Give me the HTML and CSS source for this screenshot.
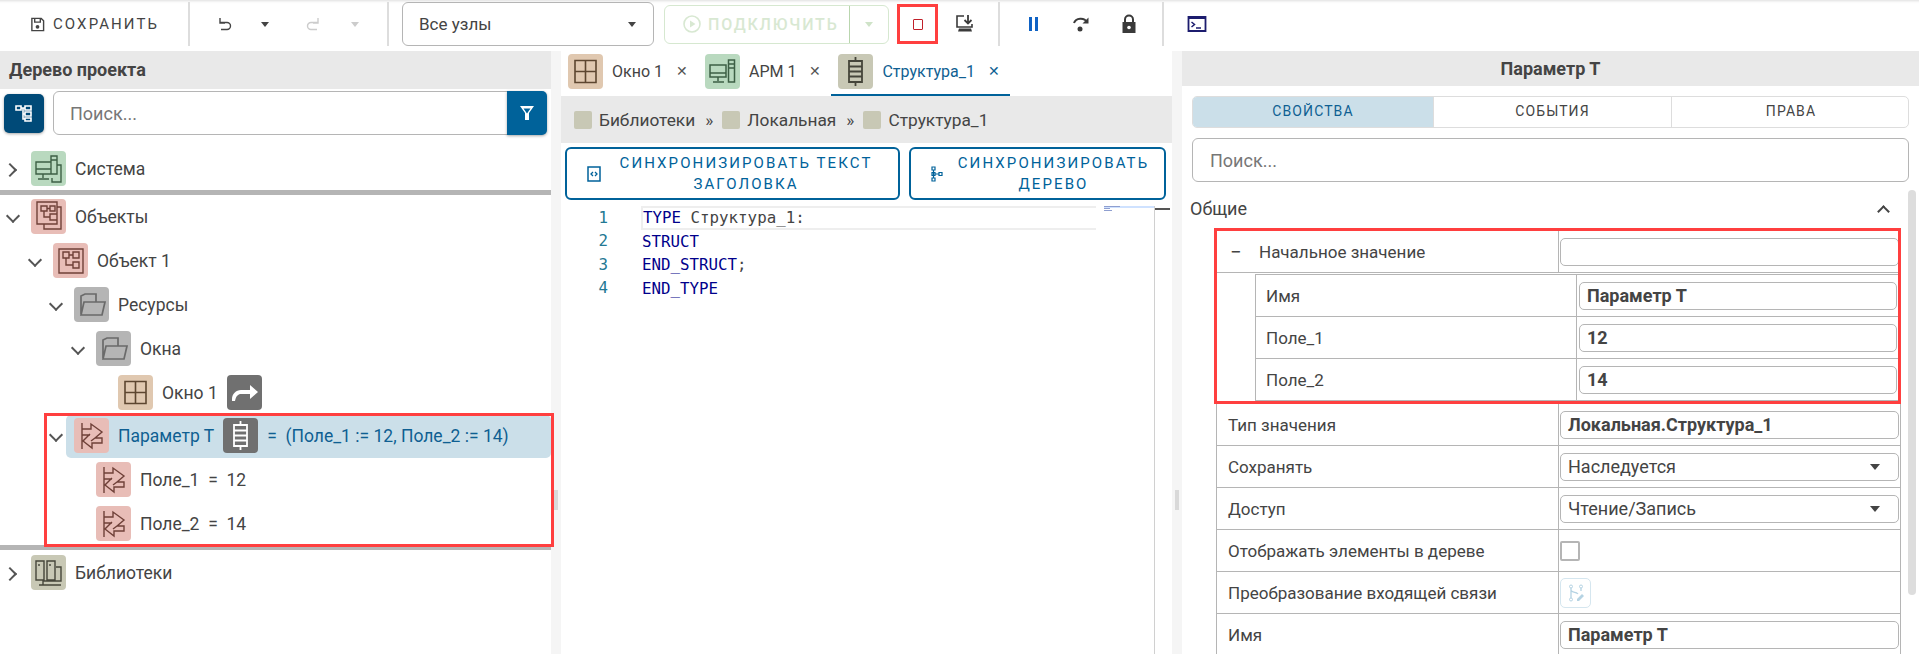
FILE: index.html
```html
<!DOCTYPE html>
<html lang="ru">
<head>
    <meta charset="UTF-8">
    <title>Дерево проекта</title>
    <link rel="stylesheet" href="styles.css">
</head>
<body>
    <!-- Набор иконок -->
    <svg class="sprite" xmlns="http://www.w3.org/2000/svg">
        <symbol id="i-window" viewBox="0 0 35 35"><path d="M7 6.500h21v22h-21zM7 17.500h21M17.500 6.500v22" fill="none" stroke="currentColor" stroke-width="1.600"/></symbol>
        <symbol id="i-arm" viewBox="0 0 35 35"><path d="M5 11h16v12h-16zM5 19h16M13 23v4M8 28h11M23.500 6h6v22h-6zM23.500 10h6M23.500 14h6" fill="none" stroke="currentColor" stroke-width="1.500"/></symbol>
        <symbol id="i-struct" viewBox="0 0 35 35"><path d="M17.500 3v4M17.500 28v4M11 7h13v21h-13zM11 12.500h13M11 17.500h13M11 22.500h13" fill="none" stroke="currentColor" stroke-width="1.800"/></symbol>
        <symbol id="i-system" viewBox="0 0 35 35"><path d="M5 11h15v12h-15zM5 18h15M12 23v4M7 28h11M20 5h6v18h-6zM20 9h6M26 14h4v17h-9v-4" fill="none" stroke="currentColor" stroke-width="1.400"/></symbol>
        <symbol id="i-objects" viewBox="0 0 35 35"><path d="M6 3h20v22h-20zM10 7h6v5h-6zM19 7h5v5h-5zM13 12v6h6M16 9.500h3M19 15h7v6h-7zM26 8h4v22h-17v-5" fill="none" stroke="currentColor" stroke-width="1.400"/></symbol>
        <symbol id="i-object" viewBox="0 0 35 35"><path d="M6 6h24v24h-24zM10 9h6v6h-6zM20 9h6v6h-6zM13 15v7h7M16 12h4M20 19h6v6h-6z" fill="none" stroke="currentColor" stroke-width="1.400"/></symbol>
        <symbol id="i-folder" viewBox="0 0 35 35"><path d="M7 27v-18l4-2h11v8M7 28l3-13h21l-3 13z" fill="none" stroke="currentColor" stroke-width="1.700"/></symbol>
        <symbol id="i-param" viewBox="0 0 35 35"><path d="M8 5v26M8 11h9v-5l11 8-7 6h7v5h-10v5l-9-7 7-7M8 17h8M21 20l-4 3" fill="none" stroke="currentColor" stroke-width="1.400"/></symbol>
        <symbol id="i-libs" viewBox="0 0 35 35"><path d="M5 6h8v19h-8zM8 9v2M16 6h8v19h-8zM19 9v2M25 12h5v14h-5M8 30h22M12 25v5M12 26h14" fill="none" stroke="currentColor" stroke-width="1.400"/></symbol>
        <symbol id="i-link" viewBox="0 0 35 35"><path d="M5 26v-2c0-5 4-9 9-9h9v-5l8 7-8 7v-5h-9c-3 0-5 2-6 7z" fill="currentColor"/></symbol>
        <symbol id="i-tree" viewBox="0 0 20 20"><path d="M2 3h5v4h-5zM11 3h6v4h-6zM11 9h6v4h-6zM11 15h6v3h-6zM7 5h4M9 5v11h2M9 11h2" fill="none" stroke="currentColor" stroke-width="1.600"/></symbol>
    </svg>

    <header class="toolbar">
        <button class="tb-save">
            <svg class="tb-save-icon" viewBox="0 0 16 16"><path d="M2 1.500h10l2.500 2.500v10.500h-12.500zM5 1.500v4h6v-4" fill="none" stroke="currentColor" stroke-width="1.500"/><circle cx="8" cy="10.500" r="2" fill="currentColor"/></svg>
            <span>СОХРАНИТЬ</span>
        </button>
        <span class="tb-sep"></span>
        <div class="tb-history">
            <svg class="tb-arrow" viewBox="0 0 16 16"><path d="M3 2v5h5M3.500 6.500h6.500a3.500 3.500 0 0 1 0 7h-6" fill="none" stroke="currentColor" stroke-width="1.400"/></svg>
            <span class="caret caret-undo"></span>
            <svg class="tb-arrow tb-off tb-redo" viewBox="0 0 16 16"><path d="M13 2v5h-5M12.500 6.500h-6.500a3.500 3.500 0 0 0 0 7h6" fill="none" stroke="currentColor" stroke-width="1.400"/></svg>
            <span class="caret caret-off"></span>
        </div>
        <span class="tb-sep"></span>
        <div class="tb-select"><span>Все узлы</span><span class="caret"></span></div>
        <div class="tb-connect">
            <div class="tb-connect-main">
                <svg class="tb-play" viewBox="0 0 18 18"><circle cx="9" cy="9" r="8" fill="none" stroke="currentColor" stroke-width="1.600"/><path d="M7 5.500l5.500 3.500-5.500 3.500z" fill="currentColor"/></svg>
                <span>ПОДКЛЮЧИТЬ</span>
            </div>
            <div class="tb-connect-more"><span class="caret caret-green"></span></div>
        </div>
        <button class="tb-stop"><span class="stop-mark"></span></button>
        <button class="tb-icon tb-download">
            <svg viewBox="0 0 20 20"><path d="M9 2h-7v11h15v-3" fill="none" stroke="#3a3a3a" stroke-width="1.600"/><path d="M4 14.500h12l1 3h-14z" fill="#3a3a3a"/><path d="M13 1v8M9.500 6l3.500 3.500 3.500-3.500" fill="none" stroke="#3a3a3a" stroke-width="1.800"/></svg>
        </button>
        <span class="tb-sep tb-sep-run"></span>
        <button class="tb-icon"><svg viewBox="0 0 20 20"><path d="M6 3h3v14h-3zM12 3h3v14h-3z" fill="#0f62c4"/></svg></button>
        <button class="tb-icon"><svg viewBox="0 0 20 20"><path d="M3 9a7 6 0 0 1 13-1" fill="none" stroke="#3a3a3a" stroke-width="2"/><path d="M17.500 3.500v6h-6z" fill="#3a3a3a"/><circle cx="9" cy="15" r="2.500" fill="#3a3a3a"/></svg></button>
        <button class="tb-icon"><svg viewBox="0 0 20 20"><path d="M6 9v-3.500a4 4 0 0 1 8 0v3.500" fill="none" stroke="#3a3a3a" stroke-width="2"/><path d="M3.500 8h13v11h-13z" fill="#3a3a3a"/><circle cx="10" cy="13.500" r="1.800" fill="#fff"/></svg></button>
        <span class="tb-sep tb-sep-end"></span>
        <button class="tb-icon tb-console"><svg viewBox="0 0 20 20"><path d="M1.500 3h17v14h-17z" fill="none" stroke="#1c1c6e" stroke-width="1.800"/><path d="M1.500 3h17v2h-17z" fill="#1c1c6e"/><path d="M4.500 8l3 2.500-3 2.500M9 14h5" fill="none" stroke="#1c1c6e" stroke-width="1.500"/></svg></button>
    </header>

    <main class="workspace">
        <section class="tree-panel">
            <h2 class="panel-title">Дерево проекта</h2>
            <div class="tree-search">
                <button class="tree-mode"><svg viewBox="0 0 20 20"><use href="#i-tree"/></svg></button>
                <div class="search-box">Поиск...</div>
                <button class="tree-filter"><svg viewBox="0 0 20 20"><path d="M3 3h14l-5 7v7h-4v-7zM6.500 5.500l3.500 5 3.500-5z" fill="#fff" fill-rule="evenodd"/></svg></button>
            </div>

            <div class="tree">
                <div class="tree-row">
                    <span class="chev chev-right"></span>
                    <div class="tree-node"><span class="tile tile-green"><svg><use href="#i-system"/></svg></span><span>Система</span></div>
                </div>
                <div class="tree-divider"></div>
                <div class="tree-row">
                    <span class="chev"></span>
                    <div class="tree-node"><span class="tile tile-red"><svg><use href="#i-objects"/></svg></span><span>Объекты</span></div>
                </div>
                <div class="tree-row lvl-1">
                    <span class="chev"></span>
                    <div class="tree-node"><span class="tile tile-red"><svg><use href="#i-object"/></svg></span><span>Объект 1</span></div>
                </div>
                <div class="tree-row lvl-2">
                    <span class="chev"></span>
                    <div class="tree-node"><span class="tile tile-gray"><svg><use href="#i-folder"/></svg></span><span>Ресурсы</span></div>
                </div>
                <div class="tree-row lvl-3">
                    <span class="chev"></span>
                    <div class="tree-node"><span class="tile tile-gray"><svg><use href="#i-folder"/></svg></span><span>Окна</span></div>
                </div>
                <div class="tree-row lvl-4">
                    <span class="chev chev-none"></span>
                    <div class="tree-node"><span class="tile tile-tan"><svg><use href="#i-window"/></svg></span><span>Окно 1</span><span class="tile tile-dark"><svg><use href="#i-link"/></svg></span></div>
                </div>

                <div class="tree-group">
                    <div class="tree-row lvl-2 is-selected">
                        <span class="chev"></span>
                        <div class="tree-node"><span class="tile tile-red"><svg><use href="#i-param"/></svg></span><span>Параметр Т</span><span class="tile tile-dark"><svg><use href="#i-struct"/></svg></span><span>=&nbsp; (Поле_1 := 12, Поле_2 := 14)</span></div>
                    </div>
                    <div class="tree-row lvl-3">
                        <span class="chev chev-none"></span>
                        <div class="tree-node"><span class="tile tile-red"><svg><use href="#i-param"/></svg></span><span>Поле_1 &nbsp;=&nbsp; 12</span></div>
                    </div>
                    <div class="tree-row lvl-3">
                        <span class="chev chev-none"></span>
                        <div class="tree-node"><span class="tile tile-red"><svg><use href="#i-param"/></svg></span><span>Поле_2 &nbsp;=&nbsp; 14</span></div>
                    </div>
                    <div class="red-frame frame-tree"></div>
                </div>

                <div class="tree-divider tree-divider-last"></div>
                <div class="tree-row">
                    <span class="chev chev-right"></span>
                    <div class="tree-node"><span class="tile tile-olive"><svg><use href="#i-libs"/></svg></span><span>Библиотеки</span></div>
                </div>
            </div>
        </section>

        <div class="splitter"><span class="splitter-grip"></span></div>

        <section class="editor">
            <nav class="tabs">
                <div class="tab">
                    <span class="tile tile-tan"><svg><use href="#i-window"/></svg></span>
                    <span>Окно 1</span><span class="tab-close">✕</span>
                </div>
                <div class="tab">
                    <span class="tile tile-green"><svg><use href="#i-arm"/></svg></span>
                    <span>АРМ 1</span><span class="tab-close">✕</span>
                </div>
                <div class="tab is-active">
                    <span class="tile tile-olive"><svg><use href="#i-struct"/></svg></span>
                    <span>Структура_1</span><span class="tab-close">✕</span>
                </div>
            </nav>
            <div class="crumbs">
                <span class="crumb-mark"></span><span>Библиотеки</span><span class="crumb-sep">»</span>
                <span class="crumb-mark"></span><span>Локальная</span><span class="crumb-sep">»</span>
                <span class="crumb-mark"></span><span>Структура_1</span>
            </div>
            <div class="sync-row">
                <button class="sync-btn sync-text">
                    <svg class="sync-icon" viewBox="0 0 16 16"><path d="M2 1h12v14h-12z" fill="none" stroke="currentColor" stroke-width="1.500"/><path d="M7 6l-2 2 2 2M9 6l2 2-2 2" fill="none" stroke="currentColor" stroke-width="1.300"/></svg>
                    <span class="sync-label">СИНХРОНИЗИРОВАТЬ ТЕКСТ ЗАГОЛОВКА</span>
                </button>
                <button class="sync-btn sync-tree">
                    <svg class="sync-icon" viewBox="0 0 16 16"><path d="M3 1h3v3h-3zM3 6.500h3v3h-3zM3 12h3v3h-3zM10 6.500h3v3h-3zM4.500 4v8M6 8h4" fill="none" stroke="currentColor" stroke-width="1.200"/></svg>
                    <span>СИНХРОНИЗИРОВАТЬ ДЕРЕВО</span>
                </button>
            </div>
            <div class="code">
                <div class="code-gutter">
                    <div>1</div><div>2</div><div>3</div><div>4</div>
                </div>
                <div class="code-lines">
                    <div class="code-line is-current"><span class="kw">TYPE</span> Структура_1:</div>
                    <div class="code-line kw">STRUCT</div>
                    <div class="code-line"><span class="kw">END_STRUCT</span>;</div>
                    <div class="code-line kw">END_TYPE</div>
                </div>
                <div class="minimap"><span class="mini-bar mini-a"></span><span class="mini-bar mini-b"></span><span class="mini-bar mini-c"></span></div>
                <div class="code-scroll"></div>
            </div>
        </section>

        <div class="splitter"><span class="splitter-grip"></span></div>

        <section class="props">
            <h2 class="props-title">Параметр Т</h2>
            <div class="props-tabs">
                <div class="props-tab is-active">СВОЙСТВА</div>
                <div class="props-tab">СОБЫТИЯ</div>
                <div class="props-tab">ПРАВА</div>
            </div>
            <div class="search-box props-search">Поиск...</div>
            <div class="props-card">
                <div class="section-head"><span>Общие</span><span class="chev-up"></span></div>
                <div class="prop-table">
                    <div class="prop-open">
                        <div class="prop-row">
                            <div class="prop-name"><span class="prop-minus">−</span>Начальное значение</div>
                            <div class="prop-cell"><div class="field"></div></div>
                        </div>
                        <div class="sub-table">
                            <div class="sub-row">
                                <div class="sub-name">Имя</div>
                                <div class="sub-cell"><div class="field field-bold">Параметр Т</div></div>
                            </div>
                            <div class="sub-row">
                                <div class="sub-name">Поле_1</div>
                                <div class="sub-cell"><div class="field field-bold">12</div></div>
                            </div>
                            <div class="sub-row">
                                <div class="sub-name">Поле_2</div>
                                <div class="sub-cell"><div class="field field-bold">14</div></div>
                            </div>
                        </div>
                        <div class="red-frame frame-props"></div>
                    </div>
                    <div class="prop-row">
                        <div class="prop-name">Тип значения</div>
                        <div class="prop-cell"><div class="field field-bold">Локальная.Структура_1</div></div>
                    </div>
                    <div class="prop-row">
                        <div class="prop-name">Сохранять</div>
                        <div class="prop-cell"><div class="field field-select"><span>Наследуется</span><span class="caret"></span></div></div>
                    </div>
                    <div class="prop-row">
                        <div class="prop-name">Доступ</div>
                        <div class="prop-cell"><div class="field field-select"><span>Чтение/Запись</span><span class="caret"></span></div></div>
                    </div>
                    <div class="prop-row">
                        <div class="prop-name">Отображать элементы в дереве</div>
                        <div class="prop-cell"><span class="checkbox"></span></div>
                    </div>
                    <div class="prop-row">
                        <div class="prop-name">Преобразование входящей связи</div>
                        <div class="prop-cell">
                            <span class="link-edit"><svg viewBox="0 0 20 20"><path d="M5 5v10M15 5v3M5 7c0 3 5 1 7 4" fill="none" stroke="currentColor" stroke-width="1.300"/><circle cx="5" cy="3.500" r="1.500" fill="none" stroke="currentColor"/><circle cx="15" cy="3.500" r="1.500" fill="none" stroke="currentColor"/><circle cx="5" cy="16.500" r="1.500" fill="none" stroke="currentColor"/><path d="M11 16l5-5 2 2-5 5h-2z" fill="currentColor"/></svg></span>
                        </div>
                    </div>
                    <div class="prop-row">
                        <div class="prop-name">Имя</div>
                        <div class="prop-cell"><div class="field field-bold">Параметр Т</div></div>
                    </div>
                </div>
                <div class="props-scroll"></div>
            </div>
        </section>
    </main>
</body>
</html>
```

FILE: styles.css
```css
* {
    box-sizing: border-box;
}

html, body {
    height: 100%;
}

body {
    margin: 0;
    display: flex;
    flex-direction: column;
    overflow: hidden;
    font-family: "Roboto", "Liberation Sans", sans-serif;
    font-size: 18px;
    color: #444444;
    background: #ffffff;
}

button {
    margin: 0;
    padding: 0;
    border: 0;
    background: none;
    font: inherit;
    color: inherit;
}

.sprite {
    display: none;
}

/* Верхняя панель */
.toolbar {
    flex: none;
    display: flex;
    align-items: center;
    height: 51px;
    padding-bottom: 3px;
    box-shadow: inset 0 4px 3px -3px #dddddd;
}

.tb-save {
    display: flex;
    align-items: center;
    gap: 8px;
    width: 188px;
    padding-left: 30px;
    font-size: 15px;
    letter-spacing: 2.100px;
}

.tb-save-icon {
    width: 15px;
    height: 15px;
}

.tb-sep {
    flex: none;
    width: 2px;
    height: 44px;
    background: #dddddd;
}

.tb-sep-run {
    margin: 0 9px 0 14px;
}

.tb-sep-end {
    margin-left: 9px;
}

.tb-console {
    margin-left: 9px;
}

.tb-history {
    display: flex;
    align-items: center;
    width: 197px;
    padding-left: 27px;
}

.tb-arrow {
    width: 16px;
    height: 16px;
}

.tb-off {
    color: #cccccc;
}

.tb-redo {
    margin-left: 36px;
}

.caret {
    display: inline-block;
    width: 0;
    height: 0;
    border-left: 4.500px solid transparent;
    border-right: 4.500px solid transparent;
    border-top: 5px solid #444444;
}

.caret-undo {
    margin-left: 28px;
}

.caret-off {
    margin-left: 30px;
    border-top-color: #cccccc;
}

.caret-green {
    border-top-color: #cfe3c8;
}

.tb-select {
    display: flex;
    align-items: center;
    justify-content: space-between;
    width: 252px;
    height: 44px;
    margin-left: 13px;
    padding: 0 17px 0 16px;
    border: 1px solid #b5b5b5;
    border-radius: 6px;
    font-size: 17px;
}

.tb-connect {
    display: flex;
    width: 225px;
    height: 39px;
    margin-left: 10px;
    border: 1px solid #d6e8d0;
    border-radius: 6px;
    color: #d8e8d2;
}

.tb-connect-main {
    flex: 1;
    display: flex;
    align-items: center;
    gap: 7px;
    padding-left: 18px;
    font-size: 16px;
    font-weight: 500;
    letter-spacing: 1.800px;
}

.tb-play {
    width: 18px;
    height: 18px;
}

.tb-connect-more {
    display: flex;
    align-items: center;
    justify-content: center;
    width: 39px;
    border-left: 1px solid #b9d6ae;
}

.tb-stop {
    display: flex;
    align-items: center;
    justify-content: center;
    width: 41px;
    height: 40px;
    margin-left: 8px;
    border: 3px solid #ff3f3f;
}

.stop-mark {
    width: 10px;
    height: 11px;
    border: 1.500px solid #c0202a;
    border-radius: 1px;
}

.tb-icon {
    display: flex;
    align-items: center;
    justify-content: center;
    flex: none;
    width: 48px;
    height: 40px;
}

.tb-icon svg {
    width: 20px;
    height: 20px;
}

.tb-download {
    width: 38px;
    margin-left: 8px;
}

/* Рабочая область */
.workspace {
    flex: 1;
    min-height: 0;
    display: grid;
    grid-template-columns: 551px 10px 611px 10px 1fr;
}

.splitter {
    background: #f5f5f5;
    padding: 439px 3px 0;
}

.splitter-grip {
    display: block;
    height: 20px;
    background: #d9d9d9;
}

/* Дерево */
.panel-title {
    margin: 0;
    height: 38px;
    padding-left: 9px;
    background: #e9e9e9;
    font-size: 18px;
    font-weight: 700;
    line-height: 38px;
}

.tree-search {
    display: flex;
    align-items: center;
    height: 48px;
    padding: 0 4px;
}

.tree-mode {
    flex: none;
    display: flex;
    align-items: center;
    justify-content: center;
    width: 40px;
    height: 39px;
    margin-right: 9px;
    border-radius: 5px;
    background: #004a78;
    color: #ffffff;
    box-shadow: 0 1px 3px rgba(0, 0, 0, 0.35);
}

.tree-mode svg {
    width: 20px;
    height: 20px;
}

.search-box {
    display: flex;
    align-items: center;
    flex: 1;
    height: 44px;
    padding-left: 16px;
    border: 1px solid #b5b5b5;
    border-radius: 6px;
    font-size: 18px;
    color: #777777;
}

.tree-filter {
    flex: none;
    display: flex;
    align-items: center;
    justify-content: center;
    width: 40px;
    height: 44px;
    margin-left: -6px;
    border-radius: 0 5px 5px 0;
    background: #00629a;
    box-shadow: 0 1px 3px rgba(0, 0, 0, 0.35);
}

.tree-filter svg {
    width: 20px;
    height: 20px;
}

.tree {
    display: flex;
    flex-direction: column;
    padding-top: 11px;
    font-size: 17.500px;
}

.tree-row {
    display: flex;
    flex: none;
    align-items: flex-start;
    height: 42px;
    margin-bottom: 2px;
}

.lvl-1 {
    padding-left: 22px;
}

.lvl-2 {
    padding-left: 43px;
}

.lvl-3 {
    padding-left: 65px;
}

.lvl-4 {
    padding-left: 87px;
}

.chev {
    flex: none;
    position: relative;
    width: 23px;
    height: 38px;
}

.chev::before {
    content: "";
    position: absolute;
    left: 8px;
    top: 15px;
    width: 8px;
    height: 8px;
    border-right: 2px solid #555555;
    border-bottom: 2px solid #555555;
    transform: rotate(45deg);
}

.chev-right::before {
    left: 5px;
    top: 17px;
    transform: rotate(-45deg);
}

.chev-none::before {
    display: none;
}

.tree-node {
    flex: 1;
    display: flex;
    align-items: center;
    gap: 9px;
    min-width: 0;
    height: 41px;
    padding: 3px 8px;
}

.is-selected {
    margin-top: -1px;
}

.is-selected .tree-node {
    height: 43px;
    padding: 3px 8px 5px;
    border-radius: 5px;
    background: #cbdfe9;
    color: #0f5f92;
}

.tree-divider {
    flex: none;
    height: 5px;
    margin: -2px 0 1px;
    background: #b5b5b5;
}

.tree-divider-last {
    margin-bottom: 2px;
}

.tree-group {
    position: relative;
}

.red-frame {
    position: absolute;
    border: 3px solid #ff3f3f;
    pointer-events: none;
}

.frame-tree {
    left: 44px;
    top: -3px;
    width: 510px;
    height: 134px;
}

.tile {
    flex: none;
    display: inline-flex;
    width: 35px;
    height: 35px;
    border-radius: 4px;
}

.tile svg {
    width: 35px;
    height: 35px;
}

.tile-green {
    background: #b9d9bf;
    color: #3d5f45;
}

.tile-red {
    background: #e8bdb7;
    color: #6f4038;
}

.tile-tan {
    background: #e0c8b0;
    color: #5d4630;
}

.tile-gray {
    background: #b5b5b5;
    color: #6a6a6a;
}

.tile-olive {
    background: #c8c8b5;
    color: #45453a;
}

.tile-dark {
    background: #707070;
    color: #ffffff;
}

/* Редактор */
.editor {
    display: flex;
    flex-direction: column;
    min-width: 0;
}

.tabs {
    flex: none;
    display: flex;
    height: 45px;
    font-size: 16px;
}

.tab {
    display: flex;
    align-items: flex-start;
    gap: 9px;
    padding: 3px 10px 0 7px;
}

.tab > span:nth-child(2) {
    line-height: 35px;
}

.tab-close {
    margin-left: 4px;
    font-size: 14px;
    line-height: 35px;
    color: #555555;
}

.tab.is-active {
    border-bottom: 2px solid #00629a;
    color: #0f5f92;
}

.tab.is-active .tab-close {
    color: #0f5f92;
}

.crumbs {
    flex: none;
    display: flex;
    align-items: center;
    height: 47px;
    padding-left: 13px;
    background: #e9e9e9;
    font-size: 17.300px;
}

.crumb-mark {
    width: 18px;
    height: 18px;
    margin-right: 7px;
    border-radius: 2px;
    background: #c8c8b5;
}

.crumb-sep {
    margin: 0 9px 0 10px;
}

.sync-row {
    flex: none;
    display: flex;
    gap: 9px;
    height: 53px;
    margin-top: 4px;
    padding-left: 4px;
}

.sync-btn {
    display: flex;
    align-items: center;
    justify-content: center;
    height: 53px;
    border: 2px solid #00629a;
    border-radius: 6px;
    color: #00629a;
    font-size: 15px;
    letter-spacing: 2.100px;
    line-height: 21px;
}

.sync-text {
    width: 335px;
    gap: 6px;
    padding-left: 19px;
    justify-content: flex-start;
}

.sync-label {
    flex: none;
    width: 276px;
}

.sync-tree {
    width: 257px;
    gap: 10px;
    padding: 0 12px 0 18px;
}

.sync-icon {
    flex: none;
    width: 16px;
    height: 16px;
}

.code {
    flex: 1;
    display: flex;
    min-height: 0;
    padding-top: 6px;
    font-family: "DejaVu Sans Mono", "Liberation Mono", monospace;
    font-size: 15.800px;
    line-height: 23.400px;
}

.code-gutter {
    flex: none;
    width: 80px;
    padding-right: 33px;
    text-align: right;
    color: #237893;
}

.code-lines {
    flex: none;
    width: 455px;
}

.code-line {
    height: 23.400px;
    padding-left: 1px;
    white-space: pre;
}

.code-line.is-current {
    border-top: 2px solid #eeeeee;
    border-bottom: 2px solid #eeeeee;
    border-left: 2px solid #eeeeee;
    padding-left: 0;
    line-height: 20px;
    height: 24px;
}

.kw {
    color: #00008b;
}

.minimap {
    flex: none;
    display: flex;
    flex-direction: column;
    gap: 1px;
    width: 59px;
    padding-left: 8px;
    border-right: 1px solid #d0d0d0;
    background: linear-gradient(#cfe2ff, #cfe2ff) no-repeat 8px 0 / 50px 2px;
}

.mini-bar {
    display: block;
    height: 1px;
    background: #8f9fd0;
}

.mini-a {
    width: 16px;
}

.mini-b {
    width: 6px;
}

.mini-c {
    width: 8px;
}

.code-scroll {
    flex: none;
    width: 15px;
    height: 2px;
    margin-top: 2px;
    background: #555555;
}

/* Свойства */
.props {
    display: flex;
    flex-direction: column;
    min-width: 0;
    overflow: hidden;
}

.props-title {
    flex: none;
    margin: 0 0 10px;
    height: 35px;
    background: #e9e9e9;
    font-size: 18px;
    font-weight: 700;
    line-height: 35px;
    text-align: center;
}

.props-tabs {
    flex: none;
    display: grid;
    grid-template-columns: 240px 238px 239px;
    height: 32px;
    margin: 0 10px;
    border: 1px solid #dddddd;
    border-radius: 5px;
    overflow: hidden;
    font-size: 14px;
    letter-spacing: 1.100px;
    padding-bottom: 2px;
}

.props-tab {
    display: flex;
    align-items: center;
    justify-content: center;
    margin-bottom: -2px;
    padding-bottom: 2px;
    border-left: 1px solid #dddddd;
}

.props-tab.is-active {
    border-left: 0;
    background: #cbdfe9;
    color: #0f5f92;
}

.props-search {
    flex: none;
    height: 44px;
    margin: 10px 10px 0;
    padding-left: 17px;
}

.props-card {
    position: relative;
    flex: 1;
    min-height: 0;
    margin-top: 4px;
}

.section-head {
    display: flex;
    align-items: center;
    justify-content: space-between;
    height: 45px;
    padding: 0 31px 0 8px;
    font-size: 18px;
}

.chev-up {
    width: 9px;
    height: 9px;
    margin-top: 5px;
    border-left: 2px solid #444444;
    border-top: 2px solid #444444;
    transform: rotate(45deg);
}

.prop-table {
    margin: 0 18px 0 34px;
    border-left: 1px solid #b5b5b5;
    border-right: 1px solid #b5b5b5;
}

.prop-open {
    position: relative;
    height: 173px;
}

.frame-props {
    left: -3px;
    top: -3px;
    width: 687px;
    height: 176px;
}

.prop-row {
    display: grid;
    grid-template-columns: 342px 1fr;
    height: 42px;
    border-bottom: 1px solid #b5b5b5;
    font-size: 17px;
}

.prop-name {
    display: flex;
    align-items: center;
    padding-left: 11px;
    border-right: 1px solid #b5b5b5;
    white-space: nowrap;
}

.prop-minus {
    width: 31px;
    padding-left: 2px;
    font-size: 20px;
}

.prop-cell {
    display: flex;
    align-items: center;
    padding: 0 1px;
}

.field {
    display: flex;
    align-items: center;
    width: 100%;
    height: 28px;
    padding-left: 7px;
    border: 1px solid #b5b5b5;
    border-radius: 5px;
    font-size: 18px;
    white-space: nowrap;
}

.field-bold {
    font-weight: 700;
}

.field-select {
    justify-content: space-between;
    padding-right: 18px;
}

.field-select .caret {
    border-left-width: 5.500px;
    border-right-width: 5.500px;
    border-top-width: 6px;
}

.sub-table {
    height: 127px;
    margin: 1px 0 0 38px;
    border-top: 1px solid #b5b5b5;
    border-left: 1px solid #b5b5b5;
}

.sub-row {
    display: grid;
    grid-template-columns: 321px 1fr;
    height: 42px;
    border-bottom: 1px solid #b5b5b5;
    font-size: 17px;
}

.sub-name {
    display: flex;
    align-items: center;
    padding-left: 10px;
    border-right: 1px solid #b5b5b5;
}

.sub-cell {
    display: flex;
    align-items: center;
    padding: 0 3px 0 2px;
}

.checkbox {
    width: 20px;
    height: 20px;
    border: 2px solid #b5b5b5;
    border-radius: 2px;
}

.link-edit {
    display: flex;
    align-items: center;
    justify-content: center;
    width: 31px;
    height: 30px;
    border: 1px solid #d5e6ef;
    border-radius: 5px;
    color: #b5d3e3;
}

.link-edit svg {
    width: 20px;
    height: 20px;
}

.props-scroll {
    position: absolute;
    top: 4px;
    right: 3px;
    width: 8px;
    height: 405px;
    border-radius: 4px;
    background: #dddddd;
}
```
